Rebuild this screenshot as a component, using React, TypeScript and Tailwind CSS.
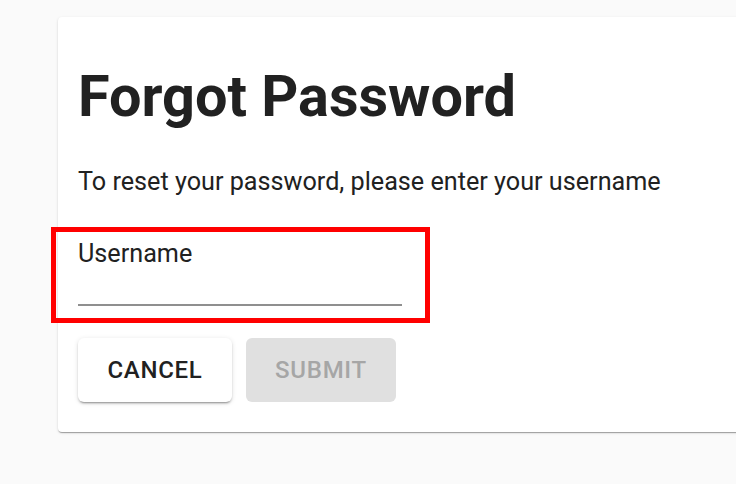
export default function App() {
  return (
    <div className="min-h-[484px] w-[736px] overflow-hidden bg-[#fafafa] pt-[17px] pl-[58px]" style={{ fontFamily: "Roboto, 'Liberation Sans', sans-serif" }}>
      <div className="w-[720px] h-[415px] rounded-[4px] bg-white pt-[51px] px-5 shadow-[0_2px_1px_-1px_rgba(0,0,0,0.2),0_1px_1px_0_rgba(0,0,0,0.14),0_1px_3px_0_rgba(0,0,0,0.12)] text-[#212121]">
        <h1 className="text-[57.6px] leading-none font-bold">Forgot Password</h1>
        <p className="mt-[43px] text-[25.2px] leading-none">To reset your password, please enter your username</p>
        <div className="mt-[33px] -ml-[27px] w-[379px] h-[96px] border-[5px] border-[#ff0000] pl-[22px] pt-[9px]">
          <div className="text-[25.2px] leading-none">Username</div>
          <div className="mt-[38px] h-[1.5px] w-[324px] bg-[#8f8f8f]" />
        </div>
        <div className="mt-[15px] flex gap-[14px]">
          <button className="h-[64px] w-[154px] rounded-[6px] bg-white text-[24px] font-medium tracking-[0.03em] text-[#212121] shadow-[0_3px_1px_-2px_rgba(0,0,0,0.2),0_2px_2px_0_rgba(0,0,0,0.14),0_1px_5px_0_rgba(0,0,0,0.12)]">CANCEL</button>
          <button className="h-[64px] w-[150px] rounded-[6px] bg-[#e0e0e0] text-[24px] font-medium tracking-[0.03em] text-[#a6a6a6]">SUBMIT</button>
        </div>
      </div>
    </div>
  );
}
